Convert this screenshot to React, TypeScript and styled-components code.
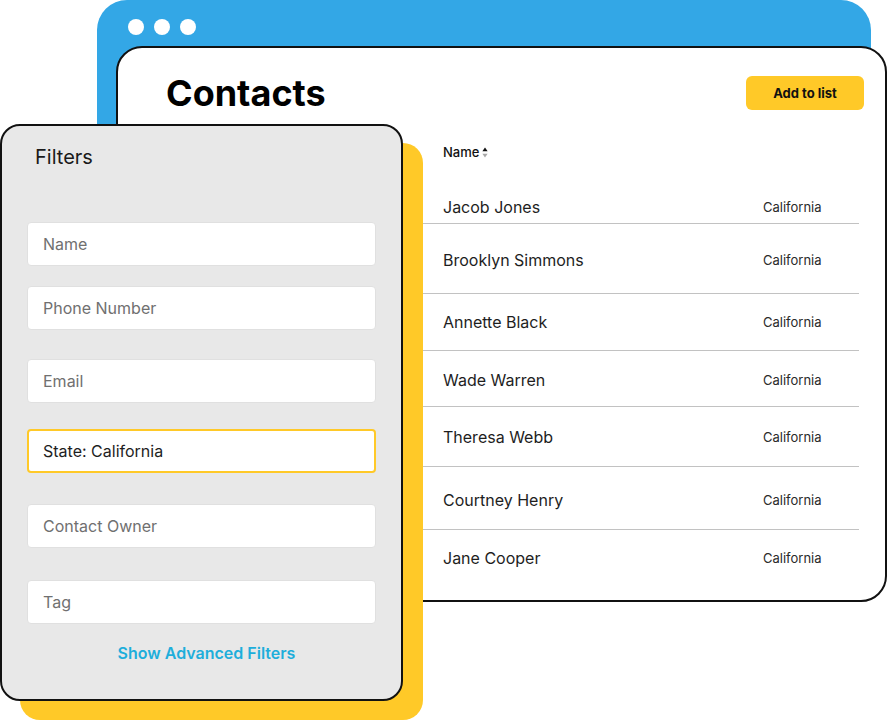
import styled, { createGlobalStyle } from 'styled-components';

const contacts = [
  { name: 'Jacob Jones', pt: 37, pb: 6 },
  { name: 'Brooklyn Simmons', pt: 26, pb: 23 },
  { name: 'Annette Black', pt: 18, pb: 18 },
  { name: 'Wade Warren', pt: 19, pb: 16 },
  { name: 'Theresa Webb', pt: 20, pb: 19 },
  { name: 'Courtney Henry', pt: 23, pb: 19 },
  { name: 'Jane Cooper', pt: 18, pb: 0 },
];

const filters = [
  { label: 'Name', top: 53 },
  { label: 'Phone Number', top: 20 },
  { label: 'Email', top: 29 },
  { label: 'State: California', top: 26, active: true },
  { label: 'Contact Owner', top: 31 },
  { label: 'Tag', top: 32 },
];

const SortIcon = () => (
  <svg width="6" height="11" viewBox="0 0 6 11">
    <path d="M3 0.5 L5.6 4.2 H0.4 Z" fill="#111" />
    <path d="M3 10.5 L5.6 6.8 H0.4 Z" fill="#a8a8a8" />
  </svg>
);

const App = () => {
  return (
    <>
      <GlobalStyle />
      <Stage>
        <BrowserFrame>
          <Dots>
            <Dot />
            <Dot />
            <Dot />
          </Dots>
        </BrowserFrame>

        <ContactsCard>
          <CardHeader>
            <Title>Contacts</Title>
            <AddButton>Add to list</AddButton>
          </CardHeader>
          <Table>
            <HeaderCell>
              Name <SortIcon />
            </HeaderCell>
            {contacts.map((c, i) => (
              <Row key={c.name} $pt={c.pt} $pb={c.pb} $last={i === contacts.length - 1}>
                <NameCell>{c.name}</NameCell>
                <StateCell>California</StateCell>
              </Row>
            ))}
          </Table>
        </ContactsCard>

        <FilterPanel>
          <FilterTitle>Filters</FilterTitle>
          {filters.map(f => (
            <FilterField key={f.label} $top={f.top} $active={f.active}>
              {f.label}
            </FilterField>
          ))}
          <AdvancedLink>Show Advanced Filters</AdvancedLink>
        </FilterPanel>
      </Stage>
    </>
  );
};

export default App;

const GlobalStyle = createGlobalStyle`
  * {
    box-sizing: border-box;
  }

  body {
    margin: 0;
    background: #ffffff;
    font-family: Inter, 'Noto Sans', sans-serif;
  }
`;

const Stage = styled.div`
  position: relative;
  width: 889px;
  height: 722px;
  overflow: hidden;
  background: #ffffff;
`;

// windows overlap each other like on a desktop, so they sit at fixed spots
const BrowserFrame = styled.div`
  position: absolute;
  left: 97px;
  top: 0;
  width: 774px;
  height: 260px;
  border-radius: 30px;
  background: #33a7e6;
  padding: 19px 0 0 31px;
`;

const Dots = styled.div`
  display: flex;
  gap: 10px;
`;

const Dot = styled.span`
  width: 16px;
  height: 16px;
  border-radius: 50%;
  background: #ffffff;
`;

const ContactsCard = styled.div`
  position: absolute;
  left: 116px;
  top: 46px;
  width: 771px;
  height: 556px;
  background: #ffffff;
  border: 2px solid #111111;
  border-radius: 26px;
  padding: 27px 21px 0 48px;
`;

const CardHeader = styled.div`
  display: flex;
  align-items: center;
  justify-content: space-between;
  height: 36px;
`;

const Title = styled.h1`
  margin: 0;
  font-size: 36px;
  line-height: 36px;
  font-weight: 700;
  color: #000000;
`;

const AddButton = styled.button`
  width: 118px;
  height: 34px;
  border: none;
  border-radius: 6px;
  background: #ffc928;
  color: #111111;
  font-family: inherit;
  font-size: 13px;
  font-weight: 700;
  cursor: pointer;
`;

const Table = styled.div`
  margin: 33px 5px 0 254px;
  display: flex;
  flex-direction: column;
`;

const HeaderCell = styled.div`
  display: flex;
  align-items: center;
  gap: 3px;
  padding-left: 23px;
  height: 16px;
  font-size: 13px;
  font-weight: 500;
  color: #111111;
`;

const Row = styled.div<{ $pt: number; $pb: number; $last?: boolean }>`
  display: flex;
  align-items: center;
  padding: ${p => p.$pt}px 0 ${p => p.$pb}px 23px;
  border-bottom: ${p => (p.$last ? 'none' : '1px solid #c2c2c2')};
`;

const NameCell = styled.div`
  flex: 1;
  font-size: 16px;
  line-height: 20px;
  color: #1e1e1e;
`;

const StateCell = styled.div`
  width: 96px;
  font-size: 13px;
  line-height: 20px;
  color: #2a2a2a;
`;

const FilterPanel = styled.div`
  position: absolute;
  left: 0;
  top: 124px;
  width: 403px;
  height: 577px;
  background: #e8e8e8;
  border: 2px solid #111111;
  border-radius: 20px;
  box-shadow: 20px 19px 0 #ffc928;
  padding: 19px 25px 0 25px;
  display: flex;
  flex-direction: column;
`;

const FilterTitle = styled.h2`
  margin: 0 0 0 8px;
  font-size: 20px;
  line-height: 24px;
  font-weight: 400;
  color: #1a1a1a;
`;

const FilterField = styled.div<{ $top: number; $active?: boolean }>`
  margin-top: ${p => p.$top}px;
  height: 44px;
  display: flex;
  align-items: center;
  padding-left: ${p => (p.$active ? 14 : 15)}px;
  background: #ffffff;
  border: ${p => (p.$active ? '2px solid #ffc928' : '1px solid #e0e0e0')};
  border-radius: 4px;
  font-size: 16px;
  color: ${p => (p.$active ? '#1e1e1e' : '#707070')};
`;

const AdvancedLink = styled.a`
  margin-top: 19px;
  padding-left: 10px;
  text-align: center;
  font-size: 16px;
  line-height: 20px;
  font-weight: 600;
  color: #1eaedb;
  cursor: pointer;
`;
